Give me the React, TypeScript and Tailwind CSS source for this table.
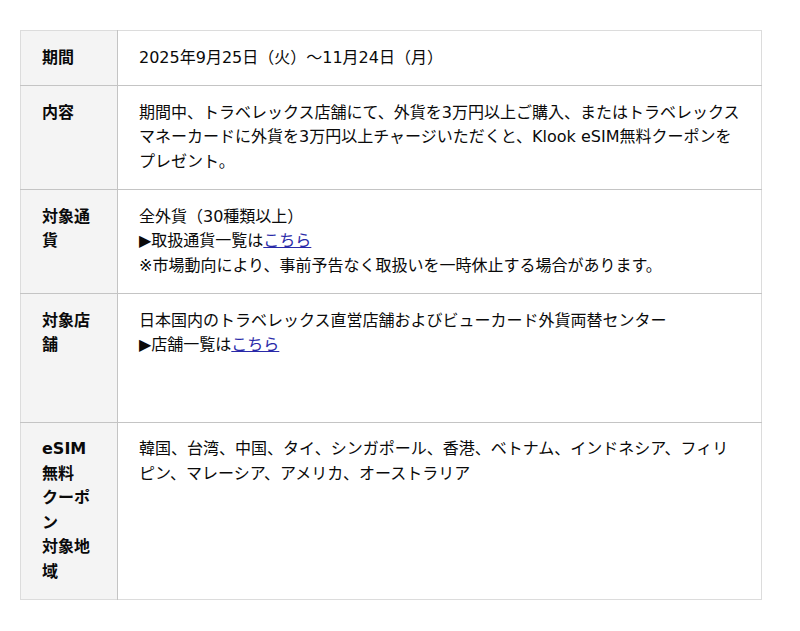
const rows: { head: React.ReactNode; body: React.ReactNode }[] = [
  {
    head: "期間",
    body: "2025年9月25日（火）～11月24日（月）",
  },
  {
    head: "内容",
    body: "期間中、トラベレックス店舗にて、外貨を3万円以上ご購入、またはトラベレックスマネーカードに外貨を3万円以上チャージいただくと、Klook eSIM無料クーポンをプレゼント。",
  },
  {
    head: "対象通貨",
    body: (
      <>
        全外貨（30種類以上）
        <br />
        ▶取扱通貨一覧は
        <a href="#" className="text-[#2929a8] underline">
          こちら
        </a>
        <br />
        ※市場動向により、事前予告なく取扱いを一時休止する場合があります。
      </>
    ),
  },
  {
    head: "対象店舗",
    body: (
      <>
        日本国内のトラベレックス直営店舗およびビューカード外貨両替センター
        <br />
        ▶店舗一覧は
        <a href="#" className="text-[#2929a8] underline">
          こちら
        </a>
        <br />
        <br />
        <br />
      </>
    ),
  },
  {
    head: (
      <>
        eSIM無料
        <br />
        クーポン
        <br />
        対象地域
      </>
    ),
    body: "韓国、台湾、中国、タイ、シンガポール、香港、ベトナム、インドネシア、フィリピン、マレーシア、アメリカ、オーストラリア",
  },
];

export default function App() {
  return (
    <div
      className="min-h-[631px] bg-white pt-[30px] pl-[20px] text-[16px] leading-[24.5px] text-[#0a0a0a]"
      style={{ fontFamily: '"DejaVu Sans", "Noto Sans CJK JP", sans-serif' }}
    >
      <table className="w-[742px] border-collapse border border-[#dcdcdc]">
        <tbody>
          {rows.map((row, i) => (
            <tr key={i} className="border-t border-[#c4c4c4] first:border-t-[#dcdcdc]">
              <th className="w-[97px] border-r border-[#c4c4c4] bg-[#f4f4f4] px-[21px] py-[14.75px] text-left align-top font-bold break-all">
                {row.head}
              </th>
              <td className="px-[21px] py-[14.75px] align-top">{row.body}</td>
            </tr>
          ))}
        </tbody>
      </table>
    </div>
  );
}
